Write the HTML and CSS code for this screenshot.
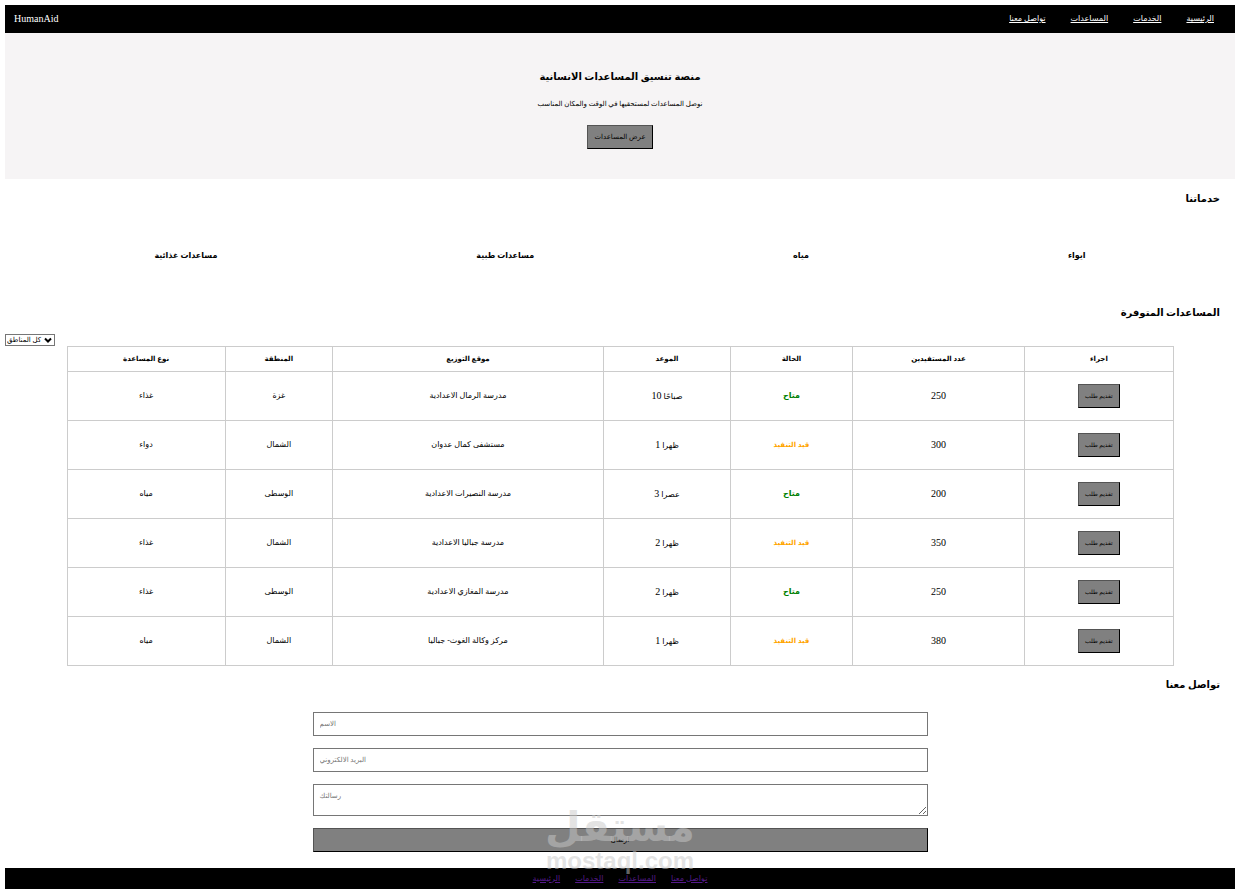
FILE: index.html
```html
<!DOCTYPE html>
<html lang="ar">

<head>
    <meta charset="UTF-8">
    <meta name="viewport" content="width=device-width, initial-scale=1.0">
    <title>HumanAid</title>
    <link rel="stylesheet" href="styles.css">
</head>

<body>
    <header class="navbar">
        <div class="logo">HumanAid</div>
        <nav class="nav-links" dir="rtl">
            <a href="#home">الرئيسية</a>
            <a href="#services">الخدمات</a>
            <a href="#aids">المساعدات</a>
            <a href="#contact">تواصل معنا</a>
        </nav>
    </header>

    <section class="hero" id="home">
        <h1>منصة تنسيق المساعدات الانسانية</h1>
        <p>نوصل المساعدات لمستحقيها في الوقت والمكان المناسب</p>
        <button class="btn" type="button">عرض المساعدات</button>
    </section>

    <section class="services" id="services">
        <h2>خدماتنا</h2>
        <div class="cards">
            <h3 class="card">مساعدات غذائية</h3>
            <h3 class="card">مساعدات طبية</h3>
            <h3 class="card">مياه</h3>
            <h3 class="card">ايواء</h3>
        </div>
    </section>

    <section class="aids" id="aids">
        <h2>المساعدات المتوفرة</h2>
        <div class="filter">
            <select aria-label="كل المناطق">
                <option>كل المناطق</option>
                <option>غزة</option>
                <option>الشمال</option>
                <option>الوسطى</option>
            </select>
            <svg class="filter-arrow" viewBox="0 0 8 6" aria-hidden="true">
                <path d="M1 1.5 L4 4.5 L7 1.5" fill="none" stroke="black" stroke-width="2" />
            </svg>
        </div>
        <table class="aid-table">
            <colgroup>
                <col class="col-type">
                <col class="col-area">
                <col class="col-place">
                <col class="col-time">
                <col class="col-status">
                <col class="col-count">
                <col class="col-action">
            </colgroup>
            <thead>
                <tr>
                    <th>نوع المساعدة</th>
                    <th>المنطقة</th>
                    <th>موقع التوزيع</th>
                    <th>الموعد</th>
                    <th>الحالة</th>
                    <th>عدد المستفيدين</th>
                    <th>اجراء</th>
                </tr>
            </thead>
            <tbody>
                <tr>
                    <td>غذاء</td>
                    <td>غزة</td>
                    <td>مدرسة الرمال الاعدادية</td>
                    <td><span class="num">10</span> صباحًا</td>
                    <td class="available">متاح</td>
                    <td class="num">250</td>
                    <td><button class="btn" type="button">تقديم طلب</button></td>
                </tr>
                <tr>
                    <td>دواء</td>
                    <td>الشمال</td>
                    <td>مستشفى كمال عدوان</td>
                    <td><span class="num">1</span> ظهرا</td>
                    <td class="pending">قيد التنفيذ</td>
                    <td class="num">300</td>
                    <td><button class="btn" type="button">تقديم طلب</button></td>
                </tr>
                <tr>
                    <td>مياه</td>
                    <td>الوسطى</td>
                    <td>مدرسة النصيرات الاعدادية</td>
                    <td><span class="num">3</span> عصرا</td>
                    <td class="available">متاح</td>
                    <td class="num">200</td>
                    <td><button class="btn" type="button">تقديم طلب</button></td>
                </tr>
                <tr>
                    <td>غذاء</td>
                    <td>الشمال</td>
                    <td>مدرسة جباليا الاعدادية</td>
                    <td><span class="num">2</span> ظهرا</td>
                    <td class="pending">قيد التنفيذ</td>
                    <td class="num">350</td>
                    <td><button class="btn" type="button">تقديم طلب</button></td>
                </tr>
                <tr>
                    <td>غذاء</td>
                    <td>الوسطى</td>
                    <td>مدرسة المغازي الاعدادية</td>
                    <td><span class="num">2</span> ظهرا</td>
                    <td class="available">متاح</td>
                    <td class="num">250</td>
                    <td><button class="btn" type="button">تقديم طلب</button></td>
                </tr>
                <tr>
                    <td>مياه</td>
                    <td>الشمال</td>
                    <td>مركز وكالة الغوث- جباليا</td>
                    <td><span class="num">1</span> ظهرا</td>
                    <td class="pending">قيد التنفيذ</td>
                    <td class="num">380</td>
                    <td><button class="btn" type="button">تقديم طلب</button></td>
                </tr>
            </tbody>
        </table>
    </section>

    <section class="contact" id="contact">
        <h2>تواصل معنا</h2>
        <form class="contact-form">
            <input type="text" placeholder="الاسم" aria-label="الاسم">
            <input type="email" placeholder="البريد الالكتروني" aria-label="البريد الالكتروني">
            <textarea placeholder="رسالتك" aria-label="رسالتك"></textarea>
            <button class="btn" type="button">ارسال</button>
        </form>
    </section>

    <footer class="footer">
        <a href="#home">الرئيسية</a>
        <a href="#services">الخدمات</a>
        <a href="#aids">المساعدات</a>
        <a href="#contact">تواصل معنا</a>
        <div class="watermark">
            <span class="watermark-ar">مستقل</span>
            <span class="watermark-en">mostaql.com</span>
        </div>
    </footer>
</body>

</html>
```

FILE: styles.css
```css
* {
    box-sizing: border-box;
}

body {
    margin: 5px;
    background-color: white;
    color: black;
    font-family: "Liberation Serif", "DejaVu Sans", serif;
    font-size: 8px;
    line-height: 12px;
}

h1,
h2,
h3,
p {
    margin: 0;
}

h2 {
    padding: 0 15px;
    font-size: 10px;
    line-height: 16px;
    text-align: right;
}

button,
input,
textarea,
select {
    font-family: inherit;
    font-size: 7px;
    line-height: 10px;
}

.num {
    font-size: 10px;
}

.btn {
    height: 24px;
    padding: 0 6px;
    background-color: gray;
    color: black;
    border: 1px outset black;
    cursor: pointer;
}

.navbar {
    display: flex;
    justify-content: space-between;
    align-items: center;
    height: 28px;
    padding: 0 21px 0 9px;
    background-color: black;
    color: white;
}

.logo {
    font-size: 10px;
}

.nav-links {
    display: flex;
    gap: 25px;
}

.nav-links a {
    color: white;
}

.hero {
    display: flex;
    flex-direction: column;
    align-items: center;
    padding: 34px 15px 30px;
    background-color: #f6f4f5;
}

.hero h1 {
    font-size: 10px;
    line-height: 20px;
}

.hero p {
    margin: 11px 0 15px;
    font-size: 7px;
}

.services {
    padding-top: 12px;
}

.cards {
    display: flex;
    justify-content: space-around;
    padding: 43px 20px;
}

.card {
    font-size: 8px;
    line-height: 12px;
}

.filter {
    position: relative;
    width: max-content;
    margin-top: 13px;
}

.filter select {
    display: block;
    height: 12px;
    padding: 0 12px 0 1px;
    appearance: none;
    background-color: white;
    color: black;
    border: 1px solid #767676;
    border-radius: 0;
}

.filter-arrow {
    position: absolute;
    top: 3px;
    right: 3px;
    width: 8px;
    height: 6px;
    pointer-events: none;
}

.aid-table {
    width: 90%;
    margin: 0 auto;
    border-collapse: collapse;
    table-layout: fixed;
    text-align: center;
}

.col-type {
    width: 14.3%;
}

.col-area {
    width: 9.7%;
}

.col-place {
    width: 24.5%;
}

.col-time {
    width: 11.5%;
}

.col-status {
    width: 11%;
}

.col-count {
    width: 15.6%;
}

.col-action {
    width: 13.4%;
}

.aid-table th,
.aid-table td {
    padding: 0;
    border: 1px solid #ccc;
}

.aid-table th {
    height: 25px;
    font-size: 7px;
}

.aid-table td {
    height: 49px;
}

.aid-table .btn {
    font-size: 6px;
}

.available {
    color: green;
    font-weight: bold;
}

.pending {
    color: orange;
    font-size: 7px;
    font-weight: bold;
}

.contact {
    padding: 11px 0 16px;
}

.contact-form {
    display: flex;
    flex-direction: column;
    gap: 12px;
    width: 50%;
    margin: 19px auto 0;
}

.contact-form input,
.contact-form textarea {
    height: 24px;
    padding: 6px;
    border: 1px solid #767676;
}

.contact-form textarea {
    height: 32px;
    resize: vertical;
}

.footer {
    position: relative;
    display: flex;
    justify-content: center;
    align-items: center;
    gap: 15px;
    height: 21px;
    background-color: black;
}

.footer a {
    color: #551a8b;
}

/* stamp that floats over the end of the form */
.watermark {
    position: absolute;
    bottom: 16px;
    left: 50%;
    display: flex;
    flex-direction: column;
    align-items: center;
    transform: translateX(-50%);
    color: rgba(200, 200, 200, 0.5);
    font-weight: bold;
    pointer-events: none;
}

.watermark-ar {
    font-family: "DejaVu Sans", sans-serif;
    font-size: 41px;
    line-height: 44px;
}

.watermark-en {
    font-family: "Liberation Sans", sans-serif;
    font-size: 24px;
    line-height: 24px;
}
```
